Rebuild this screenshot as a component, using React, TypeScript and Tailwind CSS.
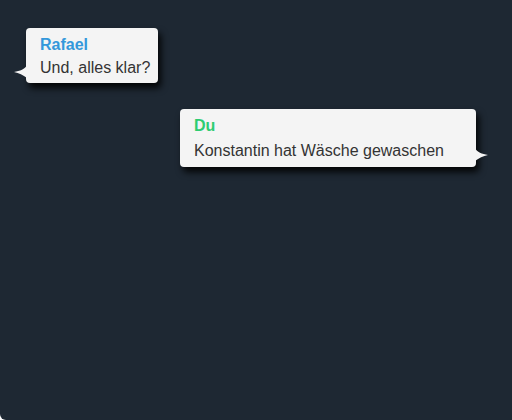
import React from "react";

function Tail({ side }: { side: "left" | "right" }) {
  if (side === "left") {
    return (
      <svg
        className="absolute left-[-12px] bottom-[5px]"
        width="13"
        height="13"
        viewBox="0 0 13 13"
      >
        <path d="M13 0 C11 4 6 6 0 7 C5 8 9 10 13 13 Z" fill="#f4f4f4" />
      </svg>
    );
  }
  return (
    <svg
      className="absolute right-[-12px] bottom-[6px]"
      width="13"
      height="13"
      viewBox="0 0 13 13"
    >
      <path d="M0 0 C2 4 7 6 13 7 C8 8 4 10 0 13 Z" fill="#f4f4f4" />
    </svg>
  );
}

function Bubble({
  name,
  color,
  text,
  side,
  width,
  extra,
  gap,
}: {
  name: string;
  color: string;
  text: string;
  side: "left" | "right";
  width: string;
  extra: string;
  gap: string;
}) {
  return (
    <div
      className={`relative rounded-[4px] bg-[#f4f4f4] pl-[14px] pt-[7px] shadow-[3px_5px_7px_rgba(0,0,0,0.9)] ${width} ${extra}`}
    >
      <div className={`text-[16px] font-bold leading-[20px] ${color}`}>{name}</div>
      <div className={`whitespace-nowrap text-[16px] leading-[22px] text-[#333333] ${gap}`}>
        {text}
      </div>
      <Tail side={side} />
    </div>
  );
}

export default function App() {
  return (
    <div
      className="h-[420px] w-[512px] rounded-bl-[6px] bg-[#1e2833]"
      style={{ fontFamily: 'Arial, "Liberation Sans", sans-serif' }}
    >
      <div className="flex flex-col pt-[28px] pl-[26px] pr-[36px]">
        <div className="flex justify-start">
          <Bubble
            name="Rafael"
            color="text-[#3498db]"
            text="Und, alles klar?"
            side="left"
            width="w-[132px]"
            extra="pb-[4px]"
            gap="mt-[2px]"
          />
        </div>
        <div className="mt-[26px] flex justify-end">
          <Bubble
            name="Du"
            color="text-[#2ecc71]"
            text="Konstantin hat Wäsche gewaschen"
            side="right"
            width="w-[296px]"
            extra="pb-[5px]"
            gap="mt-[4px]"
          />
        </div>
      </div>
    </div>
  );
}
